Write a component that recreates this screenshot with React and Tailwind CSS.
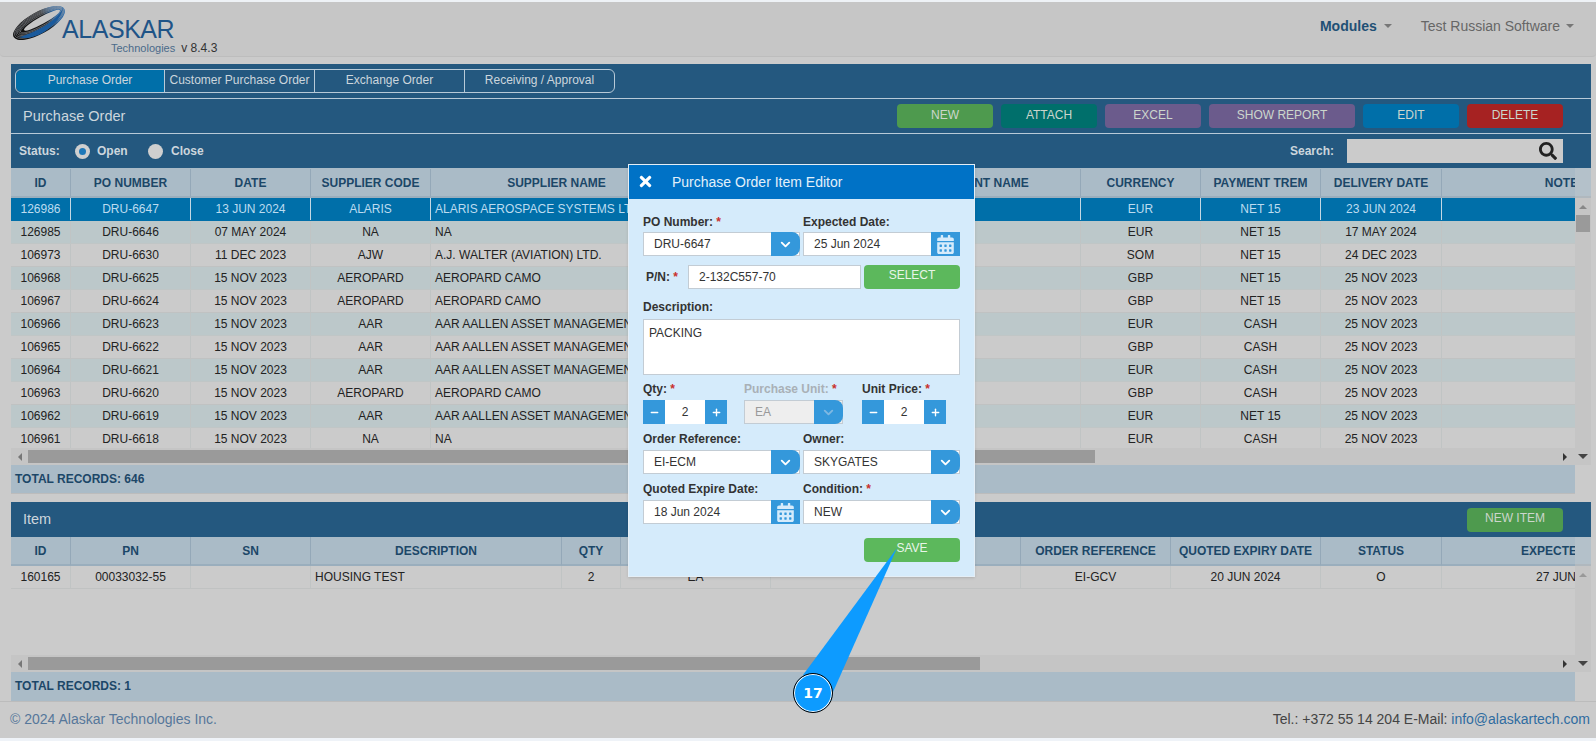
import React from 'react'
import { ChevronDown, Minus, Plus } from 'lucide-react'
import { FaCalendarAlt, FaTimes, FaSearch } from 'react-icons/fa'

const orderCols = ['w-[60px]', 'w-[120px]', 'w-[120px]', 'w-[120px]', 'w-[252px]', 'w-[196px]', 'w-[202px]', 'w-[120px]', 'w-[120px]', 'w-[121px]', 'w-[248px]']
const orderRowCols = orderCols.map((c, i) => (i === 4 ? 'w-[252px] !text-left pl-[4px]' : c))
const itemCols = ['w-[60px]', 'w-[120px]', 'w-[120px]', 'w-[251px]', 'w-[59px]', 'w-[150px]', 'w-[250px]', 'w-[150px]', 'w-[150px]', 'w-[121px]', 'w-[259px]']
const itemRowCols = itemCols.map((c, i) => (i === 3 ? 'w-[251px] !text-left pl-[4px]' : c))

const orderHead = ['ID', 'PO NUMBER', 'DATE', 'SUPPLIER CODE', 'SUPPLIER NAME', '', 'ACCOUNT NAME', 'CURRENCY', 'PAYMENT TREM', 'DELIVERY DATE', 'NOTES']
const itemHead = ['ID', 'PN', 'SN', 'DESCRIPTION', 'QTY', 'UNIT', 'UNIT PRICE', 'ORDER REFERENCE', 'QUOTED EXPIRY DATE', 'STATUS', 'EXPECTED DATE']

const orders = [
    ['126986', 'DRU-6647', '13 JUN 2024', 'ALARIS', 'ALARIS AEROSPACE SYSTEMS LTD.', '', '', 'EUR', 'NET 15', '23 JUN 2024', ''],
    ['126985', 'DRU-6646', '07 MAY 2024', 'NA', 'NA', '', '', 'EUR', 'NET 15', '17 MAY 2024', ''],
    ['106973', 'DRU-6630', '11 DEC 2023', 'AJW', 'A.J. WALTER (AVIATION) LTD.', '', '', 'SOM', 'NET 15', '24 DEC 2023', ''],
    ['106968', 'DRU-6625', '15 NOV 2023', 'AEROPARD', 'AEROPARD CAMO', '', '', 'GBP', 'NET 15', '25 NOV 2023', ''],
    ['106967', 'DRU-6624', '15 NOV 2023', 'AEROPARD', 'AEROPARD CAMO', '', '', 'GBP', 'NET 15', '25 NOV 2023', ''],
    ['106966', 'DRU-6623', '15 NOV 2023', 'AAR', 'AAR AALLEN ASSET MANAGEMENT', '', '', 'EUR', 'CASH', '25 NOV 2023', ''],
    ['106965', 'DRU-6622', '15 NOV 2023', 'AAR', 'AAR AALLEN ASSET MANAGEMENT', '', '', 'GBP', 'CASH', '25 NOV 2023', ''],
    ['106964', 'DRU-6621', '15 NOV 2023', 'AAR', 'AAR AALLEN ASSET MANAGEMENT', '', '', 'EUR', 'CASH', '25 NOV 2023', ''],
    ['106963', 'DRU-6620', '15 NOV 2023', 'AEROPARD', 'AEROPARD CAMO', '', '', 'GBP', 'CASH', '25 NOV 2023', ''],
    ['106962', 'DRU-6619', '15 NOV 2023', 'AAR', 'AAR AALLEN ASSET MANAGEMENT', '', '', 'EUR', 'NET 15', '25 NOV 2023', ''],
    ['106961', 'DRU-6618', '15 NOV 2023', 'NA', 'NA', '', '', 'EUR', 'CASH', '25 NOV 2023', ''],
]
const items = [
    ['160165', '00033032-55', '', 'HOUSING TEST', '2', 'EA', '****', 'EI-GCV', '20 JUN 2024', 'O', '27 JUN 2024'],
]

const HeadRow = ({ cols, labels, h = 'h-[29px]' }) => (
    <div className={`flex ${h} w-max bg-[#aabbc7]`}>
        {labels.map((label, i) => (
            <div key={i} className={`${cols[i]} flex shrink-0 items-center justify-center border-r border-b-2 border-[#94a8b8] border-b-[#9aaebd] text-center text-[12px] font-bold text-[#1c4768]`}>{label}</div>
        ))}
    </div>
)

const Row = ({ cols, cells, selected, tinted }) => (
    <div className={`flex h-[23px] w-max border-b ${selected ? 'bg-[#006fa9] text-[#bcdcf0] border-[#006fa9]' : tinted ? 'bg-[#bcc8ca] text-[#222] border-[#c0c6c6]' : 'bg-[#cbcbcb] text-[#222] border-[#c0c2c2]'}`}>
        {cells.map((cell, i) => (
            <div key={i} className={`${cols[i]} shrink-0 overflow-hidden whitespace-nowrap border-r text-center text-[12px] leading-[22px] ${selected ? 'border-[#c4d8e4]' : 'border-[#c0c4c4]'}`}>{cell}</div>
        ))}
    </div>
)

const HScroll = ({ thumb }) => (
    <div className="flex h-[17px] shrink-0 items-center bg-[#c5c5c5]">
        <div className="flex w-[17px] justify-center">
            <div className="h-0 w-0 border-y-[4px] border-r-[4px] border-y-transparent border-r-[#777]"></div>
        </div>
        <div className={`${thumb} h-[13px] bg-[#9a9a9a]`}></div>
        <div className="flex-1"></div>
        <div className="mr-[2px] flex w-[17px] justify-center">
            <div className="h-0 w-0 border-y-[4px] border-l-[4px] border-y-transparent border-l-[#333]"></div>
        </div>
    </div>
)

const HScrollWithCorner = ({ thumb }) => (
    <div className="flex">
        <div className="w-[1564px] shrink-0"><HScroll thumb={thumb} /></div>
        <div className="flex flex-1 items-center justify-center bg-[#c5c5c5]"><div className="h-0 w-0 border-x-[5px] border-t-[5px] border-x-transparent border-t-[#444]"></div></div>
    </div>
)

const Btn = ({ label, color, w = 'w-[96px]', leading = 'leading-[22px]' }) => (
    <div className={`${w} ${color} ${leading} h-[24px] rounded-[4px] text-center text-[12px] text-[#ccd6cc]`}>{label}</div>
)

const Label = ({ text, req, muted, top = 'mb-[3px]' }) => (
    <div className={`h-[16px] ${top} text-[12px] font-bold leading-[16px] whitespace-nowrap ${muted ? 'text-[#a9b0b6]' : 'text-[#333]'}`}>
        {text} {req && <span className="text-[#c9302c]">*</span>}
    </div>
)

const Select = ({ value, w = 'w-[157px]', disabled }) => (
    <div className={`${w} flex h-[24px] border border-[#c3ccd4] ${disabled ? 'bg-[#eeeeee] text-[#999]' : 'bg-white text-[#333]'}`}>
        <div className="flex-1 pl-[10px] text-[12px] leading-[22px]">{value}</div>
        <div className="-my-px -mr-px flex h-[24px] w-[29px] items-center justify-center rounded-tr-[8px] rounded-br-[8px] bg-[#3498db]">
            <ChevronDown size={15} strokeWidth={3} className={disabled ? 'text-[#7fb8e2]' : 'text-white'} />
        </div>
    </div>
)

const DateBox = ({ value }) => (
    <div className="flex h-[24px] w-[157px] border border-[#c3ccd4] bg-white text-[#333]">
        <div className="flex-1 pl-[10px] text-[12px] leading-[22px]">{value}</div>
        <div className="-my-px -mr-px flex h-[24px] w-[29px] items-center justify-center bg-[#3498db]">
            <FaCalendarAlt size={19} className="text-[#d5ebfb]" />
        </div>
    </div>
)

const Stepper = ({ value }) => (
    <div className="flex h-[24px] w-[84px]">
        <div className="flex w-[22px] items-center justify-center bg-[#3498db]"><Minus size={11} strokeWidth={3} className="text-white" /></div>
        <div className="w-[40px] bg-white text-center text-[12px] leading-[24px] text-[#333]">{value}</div>
        <div className="flex w-[22px] items-center justify-center bg-[#3498db]"><Plus size={11} strokeWidth={3} className="text-white" /></div>
    </div>
)

// logo ring: black stripes top left, blue sweep along the bottom
const Swirl = () => (
    <svg width="56" height="36" viewBox="0 0 56 36" className="shrink-0 overflow-visible">
        <defs>
            <linearGradient id="ring" x1="0" y1="0" x2="1" y2="0">
                <stop offset="0" stopColor="#0c0c0c" />
                <stop offset="0.62" stopColor="#1a1a1a" />
                <stop offset="0.8" stopColor="#1d5c9c" />
                <stop offset="1" stopColor="#2a6fb0" />
            </linearGradient>
        </defs>
        <g transform="rotate(-29 27 17)">
            <ellipse cx="27" cy="17" rx="29" ry="11" fill="url(#ring)" />
            <g fill="none" stroke="#9a9ea4" strokeWidth="0.5">
                <ellipse cx="27.5" cy="16.6" rx="27.8" ry="9.8" />
                <ellipse cx="28" cy="16.4" rx="26.6" ry="8.6" />
                <ellipse cx="28.5" cy="16.2" rx="25.4" ry="7.4" />
                <ellipse cx="29" cy="16" rx="24.2" ry="6.2" />
                <ellipse cx="29.5" cy="16" rx="23" ry="5" />
            </g>
            <ellipse cx="31" cy="16" rx="20.5" ry="3.6" fill="#c6c6c6" />
            <path d="M3 20 C12 30 42 31 56 15 C46 23 24 24 3 20 Z" fill="#1a5a9c" />
        </g>
    </svg>
)

const App = () => {
    return (
        <div className="relative flex h-[741px] w-[1596px] flex-col overflow-hidden bg-[#cbcbcb] font-['Liberation_Sans',sans-serif]">
            <div className="h-[2px] shrink-0 bg-[#eef2f6]"></div>

            {/* top header */}
            <div className="flex h-[55px] shrink-0 items-start justify-between rounded-b-[4px] border-b border-[#bdbdbd] bg-[#c6c6c6] pl-[12px] pr-[22px]">
                <div className="relative flex h-[54px] pt-[4px]">
                    <Swirl />
                    <div className="-ml-[6px] pt-[11px] text-[25px] font-normal leading-[25px] tracking-[-0.45px] text-[#1f5487]">ALASKAR</div>
                    <div className="absolute left-[99px] top-[39px] whitespace-nowrap text-[11px] leading-[14px] text-[#4a6a8a]">Technologies <span className="ml-[3px] text-[12px] text-[#333]">v 8.4.3</span></div>
                </div>
                <div className="flex items-center pt-[16px] text-[14px] leading-[16px]">
                    <span className="font-bold text-[#1f5075]">Modules</span>
                    <span className="ml-[7px] h-0 w-0 border-x-[4px] border-t-[4px] border-x-transparent border-t-[#777]"></span>
                    <span className="ml-[29px] text-[#666]">Test Russian Software</span>
                    <span className="ml-[6px] h-0 w-0 border-x-[4px] border-t-[4px] border-x-transparent border-t-[#777]"></span>
                </div>
            </div>

            {/* purchase order panel */}
            <div className="ml-[11px] mr-[5px] mt-[7px] flex flex-col">
                <div className="h-[35px] border-b border-[#b8cad8] bg-[#24587f] pl-[4px] pt-[5px]">
                    <div className="flex h-[24px] w-[600px] rounded-[6px] border border-[#b8cad8] text-[12px] leading-[20px] text-[#ccd6dd]">
                        <div className="w-[149px] rounded-l-[6px] border-r border-[#b8cad8] bg-[#006fa9] text-center">Purchase Order</div>
                        <div className="w-[150px] border-r border-[#b8cad8] text-center whitespace-nowrap">Customer Purchase Order</div>
                        <div className="w-[150px] border-r border-[#b8cad8] text-center">Exchange Order</div>
                        <div className="flex-1 text-center">Receiving / Approval</div>
                    </div>
                </div>
                <div className="flex h-[35px] items-center justify-between border-b border-[#b8cad8] bg-[#24587f] pl-[12px] pr-[28px]">
                    <div className="pt-[1px] text-[14.5px] text-[#ccd6dd]">Purchase Order</div>
                    <div className="flex gap-[8px]">
                        <Btn label="NEW" color="bg-[#4e9a4e]" />
                        <Btn label="ATTACH" color="bg-[#006f6b]" />
                        <Btn label="EXCEL" color="bg-[#6b5b8c]" />
                        <Btn label="SHOW REPORT" color="bg-[#6b5b8c]" w="w-[146px]" />
                        <Btn label="EDIT" color="bg-[#006fa9]" />
                        <Btn label="DELETE" color="bg-[#a62222]" />
                    </div>
                </div>
                <div className="flex h-[34px] items-center bg-[#24587f] pl-[8px] pr-[28px] text-[12px] font-bold text-[#ccd6dd]">
                    <span className="w-[56px]">Status:</span>
                    <span className="flex h-[15px] w-[15px] items-center justify-center rounded-full bg-[#cfcfcf]"><span className="h-[7px] w-[7px] rounded-full bg-[#1f78b8]"></span></span>
                    <span className="ml-[7px] w-[51px]">Open</span>
                    <span className="h-[15px] w-[15px] rounded-full bg-[#cfcfcf]"></span>
                    <span className="ml-[8px]">Close</span>
                    <span className="ml-auto mr-[13px]">Search:</span>
                    <div className="flex h-[24px] w-[216px] items-center justify-end bg-[#cbcbcb] pr-[6px]"><FaSearch size={18} className="text-[#222]" /></div>
                </div>

                <div className="flex">
                    <div className="w-[1564px] shrink-0 overflow-hidden">
                        <HeadRow cols={orderCols} labels={orderHead} h="h-[30px] pt-px" />
                        <div className="h-[250px] overflow-hidden">
                            {orders.map((row, i) => (
                                <Row key={i} cols={orderRowCols} cells={row} selected={i === 0} tinted={i % 2 === 1} />
                            ))}
                        </div>
                    </div>
                    <div className="flex flex-1 flex-col bg-[#c5c5c5]">
                        <div className="h-[30px] border-b-2 border-[#b0b8be] bg-[#b4c1ca]"></div>
                        <div className="flex h-[17px] items-center justify-center"><div className="h-0 w-0 border-x-[4px] border-b-[4px] border-x-transparent border-b-[#888]"></div></div>
                        <div className="mx-[1px] h-[17px] bg-[#9a9a9a]"></div>
                    </div>
                </div>
                <HScrollWithCorner thumb="w-[1067px]" />
                <div className="flex h-[29px]">
                    <div className="w-[1564px] border-b border-[#bcbcbc] bg-[#aabbc7] pl-[4px] text-[12px] font-bold leading-[28px] text-[#1c4768]">TOTAL RECORDS: 646</div>
                    <div className="flex-1 bg-[#cbcbcb]"></div>
                </div>
            </div>

            {/* item panel */}
            <div className="ml-[11px] mr-[5px] mt-[8px] flex flex-col">
                <div className="flex h-[35px] items-center justify-between bg-[#24587f] pl-[12px] pr-[28px]">
                    <div className="text-[14.5px] text-[#ccd6dd]">Item</div>
                    <Btn label="NEW ITEM" color="bg-[#4e9a4e]" leading="leading-[20px]" />
                </div>
                <div className="flex h-[118px]">
                    <div className="w-[1564px] shrink-0 overflow-hidden">
                        <HeadRow cols={itemCols} labels={itemHead} />
                        {items.map((row, i) => (
                            <Row key={i} cols={itemRowCols} cells={row} />
                        ))}
                    </div>
                    <div className="flex flex-1 flex-col bg-[#c5c5c5]">
                        <div className="h-[29px] border-b-2 border-[#b0b8be] bg-[#b4c1ca]"></div>
                        <div className="flex h-[17px] items-center justify-center"><div className="h-0 w-0 border-x-[4px] border-b-[4px] border-x-transparent border-b-[#999]"></div></div>
                    </div>
                </div>
                <HScrollWithCorner thumb="w-[952px]" />
                <div className="flex h-[29px]">
                    <div className="w-[1564px] bg-[#aabbc7] pl-[4px] text-[12px] font-bold leading-[28px] text-[#1c4768]">TOTAL RECORDS: 1</div>
                    <div className="flex-1 bg-[#cbcbcb]"></div>
                </div>
            </div>

            {/* footer */}
            <div className="flex h-[37px] shrink-0 items-center justify-between border-t border-[#bcbcbc] bg-[#cbcbcb] pb-[2px] pl-[10px] pr-[6px] text-[14px]">
                <span className="text-[#56779a]">© 2024 Alaskar Technologies Inc.</span>
                <span className="text-[#444]">Tel.: +372 55 14 204 E-Mail: <span className="text-[#2f6ca0]">info@alaskartech.com</span></span>
            </div>
            <div className="flex-1 bg-[#eff3f8]"></div>

            {/* item editor */}
            <div className="absolute left-[628px] top-[164px] w-[347px] border border-[#e4eef6] bg-[#d5ebfb] shadow-sm">
                <div className="flex h-[34px] items-center bg-[#0072c6] pl-[8px] text-[14px] text-[#e2f0fa]">
                    <FaTimes size={17} className="-mt-[2px] text-white" />
                    <span className="ml-[18px]">Purchase Order Item Editor</span>
                </div>
                <div className="pb-[14px] pl-[14px] pr-[14px] pt-[15px]">
                    <div className="flex gap-[3px]">
                        <div><Label text="PO Number:" req top="mb-[2px]" /><Select value="DRU-6647" /></div>
                        <div><Label text="Expected Date:" top="mb-[2px]" /><DateBox value="25 Jun 2024" /></div>
                    </div>
                    <div className="mt-[9px] flex items-center">
                        <div className="w-[45px] pl-[3px] text-[12px] font-bold text-[#333]">P/N: <span className="text-[#c9302c]">*</span></div>
                        <div className="h-[24px] w-[173px] border border-[#c3ccd4] bg-white pl-[10px] text-[12px] leading-[22px] text-[#333]">2-132C557-70</div>
                        <div className="ml-[3px] h-[24px] w-[96px] rounded-[4px] bg-[#5cb85c] text-center text-[12px] leading-[20px] text-[#e8f5e8]">SELECT</div>
                    </div>
                    <div className="mt-[10px]">
                        <Label text="Description:" top="mb-[4px]" />
                        <div className="h-[56px] w-[317px] border border-[#c3ccd4] bg-white pl-[5px] pt-[5px] text-[12px] leading-[16px] text-[#333]">PACKING</div>
                    </div>
                    <div className="mt-[6px] flex">
                        <div className="w-[101px]"><Label text="Qty:" req /><Stepper value="2" /></div>
                        <div className="w-[118px]"><Label text="Purchase Unit:" req muted /><Select value="EA" w="w-[99px]" disabled /></div>
                        <div><Label text="Unit Price:" req /><Stepper value="2" /></div>
                    </div>
                    <div className="mt-[7px] flex gap-[3px]">
                        <div><Label text="Order Reference:" /><Select value="EI-ECM" /></div>
                        <div><Label text="Owner:" /><Select value="SKYGATES" /></div>
                    </div>
                    <div className="mt-[7px] flex gap-[3px]">
                        <div><Label text="Quoted Expire Date:" /><DateBox value="18 Jun 2024" /></div>
                        <div><Label text="Condition:" req /><Select value="NEW" /></div>
                    </div>
                    <div className="mt-[14px] flex justify-end">
                        <div className="h-[24px] w-[96px] rounded-[4px] bg-[#5cb85c] text-center text-[12px] leading-[20px] text-[#e8f5e8]">SAVE</div>
                    </div>
                </div>
            </div>

            {/* step callout */}
            <svg width="110" height="170" viewBox="0 0 110 170" className="pointer-events-none absolute left-[795px] top-[540px]">
                <polygon points="102,8 8,135 38,152" fill="#0d9bff" />
            </svg>
            <div className="absolute left-[793px] top-[673px] flex h-[40px] w-[40px] items-center justify-center rounded-full border border-black bg-[#0d9bff] pt-[1px] text-[14px] font-bold text-white shadow-[inset_0_0_0_1px_#fff] font-['DejaVu_Sans',sans-serif]">17</div>
        </div>
    )
}

export default App
